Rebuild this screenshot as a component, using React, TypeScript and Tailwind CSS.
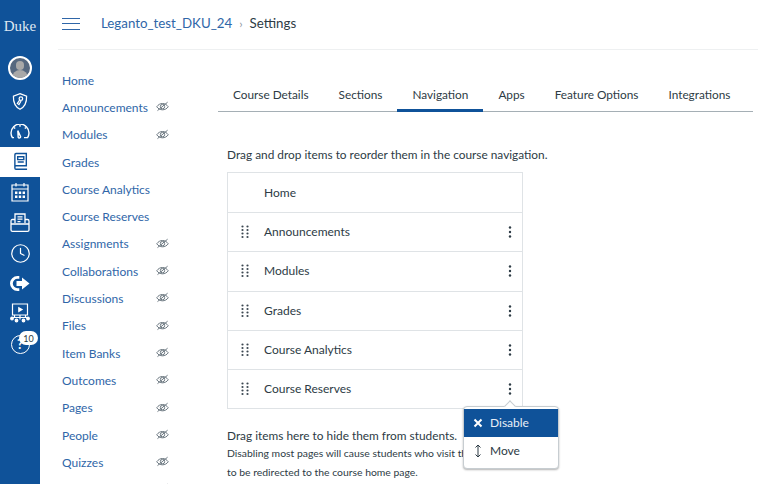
import { Clock } from "lucide-react";
import type { ReactNode } from "react";

const navItems = [
  { label: "Home", hidden: false },
  { label: "Announcements", hidden: true },
  { label: "Modules", hidden: true },
  { label: "Grades", hidden: false },
  { label: "Course Analytics", hidden: false },
  { label: "Course Reserves", hidden: false },
  { label: "Assignments", hidden: true },
  { label: "Collaborations", hidden: true },
  { label: "Discussions", hidden: true },
  { label: "Files", hidden: true },
  { label: "Item Banks", hidden: true },
  { label: "Outcomes", hidden: true },
  { label: "Pages", hidden: true },
  { label: "People", hidden: true },
  { label: "Quizzes", hidden: true },
  { label: "", hidden: true },
];

const tabs = ["Course Details", "Sections", "Navigation", "Apps", "Feature Options", "Integrations"];
const rows = ["Announcements", "Modules", "Grades", "Course Analytics", "Course Reserves"];

function EyeOff() {
  return (
    <svg width="13" height="11" viewBox="0 0 13 11" fill="none" stroke="#6b7780" strokeWidth="1" aria-hidden>
      <path d="M.7 5.8C2.3 3.6 4.3 2.5 6.5 2.5s4.2 1.1 5.800 3.300c-1.600 2-3.600 3-5.800 3S2.300 7.800.7 5.800Z" />
      <circle cx="6.5" cy="5.600" r="2.200" />
      <path d="M1.500 9.600 11.600 1.200" />
    </svg>
  );
}

function Grip() {
  return (
    <svg width="8" height="14" viewBox="0 0 8 14" fill="#3c4852" aria-hidden>
      {[1.5, 5, 8.5, 12].map((y) => (
        <g key={y}>
          <circle cx="1.500" cy={y} r="1.100" />
          <circle cx="6.500" cy={y} r="1.100" />
        </g>
      ))}
    </svg>
  );
}

function Kebab() {
  return (
    <svg width="4" height="12" viewBox="0 0 4 12" fill="#2d3b45" aria-hidden>
      <circle cx="2" cy="1.500" r="1.200" />
      <circle cx="2" cy="6" r="1.200" />
      <circle cx="2" cy="10.500" r="1.200" />
    </svg>
  );
}

function RailIcon({ children, active }: { children: ReactNode; active?: boolean }) {
  return (
    <div className={`relative flex h-[30.4px] w-full items-center justify-center ${active ? "bg-white" : ""}`}>
      {children}
    </div>
  );
}

function Rail() {
  return (
    <aside className="flex h-[484px] w-10 shrink-0 flex-col items-center bg-[#0f5299] text-white">
      <div className="mt-[17px] font-['Liberation_Serif',serif] text-[15px] leading-[18px] text-[#dfe7f1]">Duke</div>
      <div className="mt-[16px] flex w-full flex-col">
        <div className="flex h-[35px] w-full items-start justify-center pt-[5px]">
          <div className="relative h-6 w-6 overflow-hidden rounded-full border-2 border-white bg-[#56687f]">
            <span className="absolute left-[6px] top-[3px] h-[9px] w-[8px] rounded-full bg-[#a8a8a8]" />
            <span className="absolute left-[2px] top-[12px] h-[10px] w-4 rounded-t-full bg-[#a8a8a8]" />
          </div>
        </div>
        <RailIcon>
          <svg width="16" height="19" viewBox="0 0 18 20" fill="none" stroke="white" strokeWidth="1.400" aria-hidden>
            <path d="M9 1.200 16.400 4c.3 6.600-1.600 11.600-7.400 14.800C3.200 15.600 1.300 10.600 1.600 4L9 1.200Z" />
            <circle cx="10" cy="6.800" r="2" />
            <path d="M8.600 8.400 6 12.200l1.800 1.200 2.400-4" />
          </svg>
        </RailIcon>
        <RailIcon>
          <svg width="20" height="15" viewBox="0 0 20 15" fill="none" stroke="white" strokeWidth="1.400" aria-hidden>
            <path d="M4 13.600H2.400A9 9 0 0 1 1 9a9 9 0 0 1 18 0 9 9 0 0 1-1.400 4.600H14" />
            <path d="m7.800 6.600 2.800 6a1.300 1.300 0 0 1-2.400.8L7.800 6.600Z" />
            <path d="M10 1v1.800M4 3.400l1.200 1.200M16 3.400l-1.200 1.200" />
          </svg>
        </RailIcon>
        <RailIcon active>
          <svg width="15" height="19" viewBox="0 0 16 19" fill="none" stroke="#0f5299" strokeWidth="1.500" aria-hidden>
            <path d="M2 15V2.200C2 1.500 2.500 1 3.200 1H14.200V14H3.200C2.500 14 2 14.500 2 15.200V16.400C2 17.200 2.500 17.800 3.200 17.800H15" />
            <path d="M5 4.500h6.500v3H5zM5 10h6.500" />
          </svg>
        </RailIcon>
        <RailIcon>
          <svg width="18" height="20" viewBox="0 0 18 20" fill="none" stroke="white" strokeWidth="1.200" aria-hidden>
            <path d="M1 3h16v16H1zM1 7h16M5 1v3.500M13 1v3.500" />
            <g fill="white" stroke="none">
              <path d="M4 9.500h2.400v2.400H4zM7.800 9.500h2.400v2.400H7.800zM11.600 9.500H14v2.400h-2.400zM4 13.500h2.400v2.400H4zM7.800 13.500h2.400v2.400H7.800zM11.600 13.500H14v2.400h-2.400z" />
            </g>
          </svg>
        </RailIcon>
        <RailIcon>
          <svg width="20" height="19" viewBox="0 0 20 19" fill="none" stroke="white" strokeWidth="1.300" aria-hidden>
            <path d="M5 10V1h10v9M5 6.500H2.500C1.600 6.500 1 7.100 1 8v9c0 .8.6 1.300 1.500 1.300h15c.9 0 1.500-.5 1.500-1.300V8c0-.9-.6-1.500-1.500-1.500H15M1 11h18" />
            <path d="M7.500 3.800h5M7.500 6.200h5M7.500 8.600h3" />
          </svg>
        </RailIcon>
        <RailIcon>
          <Clock size={21} strokeWidth={1.400} />
        </RailIcon>
        <RailIcon>
          <svg width="20" height="15" viewBox="0 0 20 15" fill="white" aria-hidden>
            <path d="M7.500 0a7.500 7.500 0 0 0 0 15h1.800v-2.800H7.500a4.700 4.700 0 0 1 0-9.400h1.800V0H7.500Z" />
            <path d="M12 1.500 19.500 7.500 12 13.500V10H6.500V5H12V1.500Z" />
          </svg>
        </RailIcon>
        <RailIcon>
          <svg width="20" height="21" viewBox="0 0 20 21" fill="none" stroke="white" strokeWidth="1.200" aria-hidden>
            <path d="M2.500 1h15v11h-15zM4.500 12v2.500M10 12v4.500M15.500 12v2.500M1 14.500h18" />
            <path d="M8.800 4.800 12 6.600 8.800 8.400Z" fill="white" />
            <circle cx="2" cy="15.500" r="1.300" fill="white" />
            <circle cx="18" cy="15.500" r="1.300" fill="white" />
            <circle cx="6.500" cy="17.500" r="1.300" fill="white" />
            <circle cx="13.500" cy="17.500" r="1.300" fill="white" />
          </svg>
        </RailIcon>
        <RailIcon>
          <div className="flex h-[19px] w-[19px] items-center justify-center rounded-full border-[1.5px] border-white text-[13px] font-bold leading-none">
            ?
          </div>
          <span className="absolute left-[19px] top-[2px] flex h-[14px] w-[19px] items-center justify-center rounded-full bg-white text-[9px] leading-none text-[#2d3b45]">
            10
          </span>
        </RailIcon>
      </div>
    </aside>
  );
}

function CourseNav() {
  return (
    <nav className="flex w-[160px] shrink-0 flex-col pl-[22px] pt-[17px]">
      {navItems.map((item) => (
        <div key={item.label} className="relative flex h-[27.3px] shrink-0 items-center text-[12px] text-[#2f66a8]">
          <span>{item.label}</span>
          {item.hidden && (
            <span className="absolute left-[94px] top-[7px]">
              <EyeOff />
            </span>
          )}
        </div>
      ))}
    </nav>
  );
}

function Settings() {
  return (
    <main className="relative min-w-0 flex-1 pl-[18px] pt-[27px]">
      <div className="flex h-[35px] w-[535px] items-stretch border-b border-[#a5afb5] text-[11.8px] text-[#2d3b45]">
        {tabs.map((tab) => (
          <div
            key={tab}
            className={`flex items-center whitespace-nowrap px-[15px] pt-[1px] ${tab === "Navigation" ? "-mb-px border-b-[3px] border-[#0f5299] pt-[3px]" : ""}`}
          >
            {tab}
          </div>
        ))}
      </div>
      <div className="pl-[9px]">
        <p className="mt-[34px] text-[11.85px] leading-[18px] text-[#2d3b45]">
          Drag and drop items to reorder them in the course navigation.
        </p>
        <div className="mt-[8px] w-[296px] border border-[#dfe3e6] text-[12px] text-[#2d3b45]">
          <div className="flex h-[39px] items-center pl-[36px]">Home</div>
          {rows.map((row) => (
            <div key={row} className="flex h-[39.3px] items-center border-t border-[#dfe3e6] pl-[13px] pr-[10px]">
              <Grip />
              <span className="ml-[15px] flex-1">{row}</span>
              <Kebab />
            </div>
          ))}
        </div>
        <p className="mt-[18px] text-[11.85px] leading-[18px] text-[#2d3b45]">Drag items here to hide them from students.</p>
        <p className="-mt-[1px] w-[330px] text-[10.4px] leading-[18.5px] text-[#2d3b45]">
          Disabling most pages will cause students who visit those pages
          <br />
          to be redirected to the course home page.
        </p>
      </div>
      <div className="absolute left-[263px] top-[356px] w-[96px] rounded-[4px] border border-[#c7cdd1] bg-white pb-[3px] pt-[2px] text-[12px] shadow-[0_1px_2px_rgba(0,0,0,0.3)]">
        <span className="absolute left-[42px] top-[-5px] h-2 w-2 rotate-45 border-l border-t border-[#c7cdd1] bg-white" />
        <div className="relative flex h-[28px] items-center bg-[#0f5299] pl-[9px] text-[#e8eef6]">
          <svg width="10" height="10" viewBox="0 0 10 10" fill="none" stroke="white" strokeWidth="2" aria-hidden>
            <path d="m1.500 1.500 7 7M8.500 1.500l-7 7" />
          </svg>
          <span className="ml-[7px]">Disable</span>
        </div>
        <div className="flex h-[28px] items-center pl-[9px] text-[#2d3b45]">
          <svg width="10" height="14" viewBox="0 0 10 14" fill="none" stroke="#2d3b45" strokeWidth="1" aria-hidden>
            <path d="M5 1v12M2.500 3.500 5 1l2.500 2.500M2.500 10.500 5 13l2.500-2.500" />
          </svg>
          <span className="ml-[7px]">Move</span>
        </div>
      </div>
    </main>
  );
}

export default function App() {
  return (
    <div className="flex h-[484px] w-[758px] overflow-hidden bg-white font-['Lato',sans-serif]">
      <Rail />
      <div className="flex min-w-0 flex-1 flex-col">
        <header className="ml-[18px] flex h-[50px] shrink-0 items-center border-b border-[#eef0f1] pb-[2px]">
          <div className="ml-[4px] flex w-[18px] flex-col gap-[4.5px]">
            <span className="h-px bg-[#2f66a8]" />
            <span className="h-px bg-[#2f66a8]" />
            <span className="h-px bg-[#2f66a8]" />
          </div>
          <span className="ml-[21px] text-[13.3px] text-[#2f66a8]">Leganto_test_DKU_24</span>
          <span className="mx-[7px] text-[12px] text-[#8b969e]">›</span>
          <span className="text-[13.3px] text-[#2d3b45]">Settings</span>
        </header>
        <div className="flex min-h-0 flex-1">
          <CourseNav />
          <Settings />
        </div>
      </div>
    </div>
  );
}
